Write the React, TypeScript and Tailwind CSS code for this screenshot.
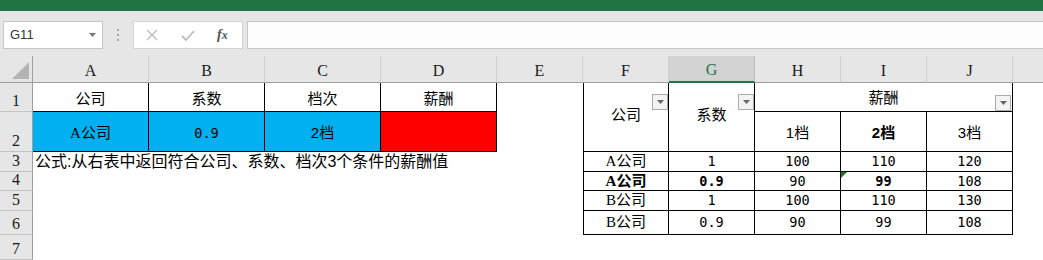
import React from "react";

const serif = "font-['Liberation_Serif','Noto_Sans_CJK_SC',serif]";
const sans = "font-['Liberation_Sans','Noto_Sans_CJK_SC',sans-serif]";
const mono = "font-['DejaVu_Sans_Mono','Noto_Sans_CJK_SC',monospace]";

// K is only partly on screen, so its letter is not drawn
const colLetters = ["A", "B", "C", "D", "E", "F", "G", "H", "I", "J", ""];
const colStart = [
  "col-start-2", "col-start-3", "col-start-4", "col-start-5", "col-start-6", "col-start-7",
  "col-start-8", "col-start-9", "col-start-10", "col-start-11", "col-start-12",
];
const rowStart = ["row-start-2", "row-start-3", "row-start-4", "row-start-5", "row-start-6", "row-start-7", "row-start-8"];

// right table body rows
const dataRows = [
  { co: "A公司", k: "1", h: "100", i: "110", j: "120", bold: false },
  { co: "A公司", k: "0.9", h: "90", i: "99", j: "108", bold: true },
  { co: "B公司", k: "1", h: "100", i: "110", j: "130", bold: false },
  { co: "B公司", k: "0.9", h: "90", i: "99", j: "108", bold: false },
];

function FilterBtn({ className }: { className: string }) {
  return (
    <div className={`absolute w-[16px] h-[16px] border border-[#ababab] bg-[#f3f3f3] flex items-center justify-center ${className}`}>
      <svg width="7" height="4" viewBox="0 0 7 4">
        <path d="M0 0h7L3.5 4z" fill="#666" />
      </svg>
    </div>
  );
}

function FormulaBar() {
  return (
    <div className="h-[45px] bg-[#e6e6e6] flex items-start pt-[10px]">
      <div className="ml-[3px] w-[100px] h-[28px] border border-[#c6c6c6] bg-white flex items-center justify-between pl-[6px] pr-[6px]">
        <span className={`${sans} text-[13px] text-[#333]`}>G11</span>
        <svg width="7" height="4" viewBox="0 0 7 4">
          <path d="M0 0h7L3.5 4z" fill="#777" />
        </svg>
      </div>
      <div className="ml-[14px] h-[28px] flex flex-col justify-center gap-[3px]">
        <span className="w-[2px] h-[2px] bg-[#a6a6a6]" />
        <span className="w-[2px] h-[2px] bg-[#a6a6a6]" />
        <span className="w-[2px] h-[2px] bg-[#a6a6a6]" />
      </div>
      <div className="ml-[14px] w-[110px] h-[28px] border border-[#d4d4d4] bg-white flex items-center">
        <svg className="ml-[12px]" width="12" height="12" viewBox="0 0 12 12">
          <path d="M1 1l10 10M11 1L1 11" stroke="#bdbdbd" strokeWidth="1.4" />
        </svg>
        <svg className="ml-[23px]" width="14" height="11" viewBox="0 0 14 11">
          <path d="M1 6l4 4L13 1" stroke="#bdbdbd" strokeWidth="1.8" fill="none" />
        </svg>
        <span className={`ml-[22px] ${serif} italic font-bold text-[14px] text-[#555] leading-none`}>
          f<span className="text-[12px]">x</span>
        </span>
      </div>
      <div className="ml-[4px] flex-1 -mr-[2px] h-[28px] border border-[#c6c6c6] bg-[#fdfdfd]" />
    </div>
  );
}

export default function App() {
  return (
    <div className="w-[1043px] h-[260px] overflow-hidden bg-white">
      <div className="h-[11px] bg-[#217346]" />
      <FormulaBar />

      <div className="grid w-[1099px] grid-cols-[33px_116px_116px_116px_116px_86px_86px_86px_86px_86px_86px_86px] grid-rows-[27px_29px_40px_20px_19px_20px_24px_1fr] h-[204px]">
        {/* corner */}
        <div className="col-start-1 row-start-1 bg-[#e6e6e6] border-r border-b border-[#9e9e9e] flex items-end justify-end pr-[2px] pb-[2px]">
          <svg width="18" height="18" viewBox="0 0 18 18">
            <path d="M17 0v17H0z" fill="#b4b4b4" />
          </svg>
        </div>

        {/* column headers */}
        {colLetters.map((c, i) => {
          const sel = c === "G";
          return (
            <div
              key={i}
              className={`${colStart[i]} row-start-1 flex items-center justify-center pt-[3px] ${serif} text-[16px] ${
                sel
                  ? "bg-[#d2d2d2] border-b-2 border-b-[#217346] text-[#217346] border-r border-r-[#bdbdbd]"
                  : "bg-[#e6e6e6] border-b border-b-[#9e9e9e] text-[#1a1a1a] border-r border-r-[#cfcfcf]"
              }`}
            >
              {c}
            </div>
          );
        })}

        {/* row headers */}
        {rowStart.map((r, i) => (
          <div
            key={r}
            className={`col-start-1 ${r} bg-[#e6e6e6] border-r border-r-[#9e9e9e] border-b border-b-[#c3c3c3] flex items-end justify-center pb-[1px] ${serif} text-[16px] leading-[18px] text-[#1a1a1a]`}
          >
            {i + 1}
          </div>
        ))}

        {/* left table */}
        {["公司", "系数", "档次", "薪酬"].map((t, i) => (
          <div
            key={t}
            className={`${colStart[i]} row-start-2 border-r border-b border-black flex items-center justify-center pt-[4px] ${sans} text-[15px] text-black`}
          >
            {t}
          </div>
        ))}
        <div className={`col-start-2 row-start-3 bg-[#00b0f0] border-r border-b border-black flex items-center justify-center pt-[4px] ${serif} text-[15px]`}>
          A公司
        </div>
        <div className={`col-start-3 row-start-3 bg-[#00b0f0] border-r border-b border-black flex items-center justify-center pt-[4px] ${mono} text-[13.5px]`}>
          0.9
        </div>
        <div className={`col-start-4 row-start-3 bg-[#00b0f0] border-r border-b border-black flex items-center justify-center pt-[4px] ${sans} text-[15px]`}>
          2档
        </div>
        <div className="col-start-5 row-start-3 bg-[#ff0000] border-r border-b border-black" />

        <div className={`col-start-2 col-span-10 row-start-4 pl-[2px] whitespace-nowrap flex items-center ${sans} text-[16px] text-black`}>
          公式:从右表中返回符合公司、系数、档次3个条件的薪酬值
        </div>

        {/* right table header */}
        <div className={`relative col-start-7 row-start-2 row-span-2 border-l border-r border-b border-black flex items-center justify-center pb-[4px] ${sans} text-[15px]`}>
          公司
          <FilterBtn className="top-[11px] right-[0px]" />
        </div>
        <div className={`relative col-start-8 row-start-2 row-span-2 border-r border-b border-black flex items-center justify-center pb-[4px] ${sans} text-[15px]`}>
          系数
          <FilterBtn className="top-[11px] right-[0px]" />
        </div>
        <div className={`relative col-start-9 col-span-3 row-start-2 border-r border-b border-black flex items-center justify-center pt-[3px] ${sans} text-[15px]`}>
          薪酬
          <FilterBtn className="top-[12px] right-[1px]" />
        </div>
        <div className={`col-start-9 row-start-3 border-r border-b border-black flex items-center justify-center pt-[3px] ${sans} text-[15px]`}>
          1档
        </div>
        <div className={`col-start-10 row-start-3 border-r border-b border-black flex items-center justify-center pt-[3px] ${sans} font-bold text-[15px]`}>
          2档
        </div>
        <div className={`col-start-11 row-start-3 border-r border-b border-black flex items-center justify-center pt-[3px] ${sans} text-[15px]`}>
          3档
        </div>

        {/* right table body */}
        {dataRows.map((d, i) => {
          const r = rowStart[i + 2];
          const b = d.bold ? "font-bold" : "";
          return (
            <React.Fragment key={i}>
              <div className={`col-start-7 ${r} border-l border-r border-b border-black flex items-center justify-center ${serif} text-[15px] ${b}`}>
                {d.co}
              </div>
              <div className={`col-start-8 ${r} border-r border-b border-black flex items-center justify-center ${mono} text-[13.5px] ${b}`}>
                {d.k}
              </div>
              <div className={`col-start-9 ${r} border-r border-b border-black flex items-center justify-center ${mono} text-[13.5px]`}>
                {d.h}
              </div>
              <div className={`relative col-start-10 ${r} border-r border-b border-black flex items-center justify-center ${mono} text-[13.5px] ${b}`}>
                {d.bold && (
                  <span className="absolute top-0 left-0 w-0 h-0 border-t-[6px] border-t-[#1e7b1e] border-r-[6px] border-r-transparent" />
                )}
                {d.i}
              </div>
              <div className={`col-start-11 ${r} border-r border-b border-black flex items-center justify-center ${mono} text-[13.5px]`}>
                {d.j}
              </div>
            </React.Fragment>
          );
        })}
      </div>
    </div>
  );
}
